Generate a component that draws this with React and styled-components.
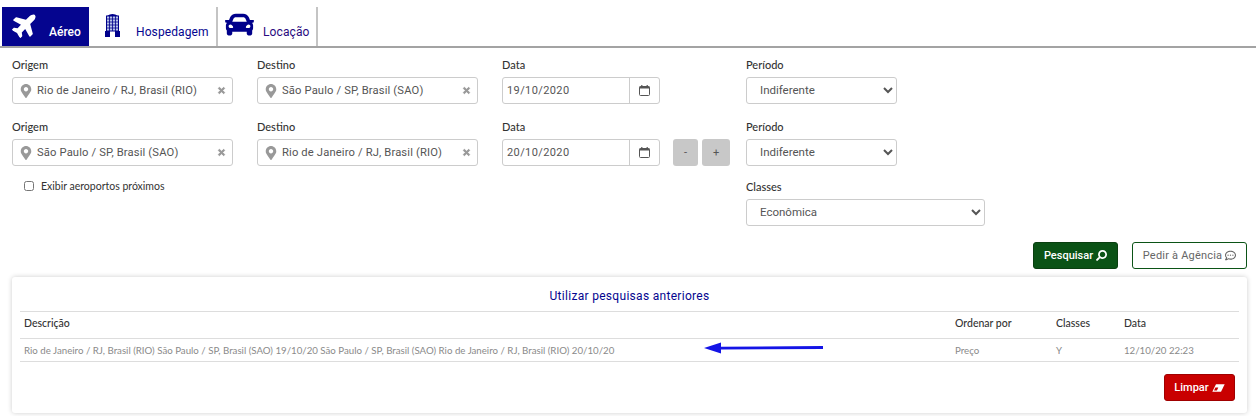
import React from "react";
import styled, { createGlobalStyle } from "styled-components";
import { FaPlane, FaCar, FaMapMarkerAlt, FaTimes, FaSearch, FaRegCommentDots } from "react-icons/fa";

const GlobalStyle = createGlobalStyle`
  html, body {
    margin: 0;
    padding: 0;
    background: #fff;
    font-family: "Roboto", "Liberation Sans", sans-serif;
  }
`;

const history = "Rio de Janeiro / RJ, Brasil (RIO) São Paulo / SP, Brasil (SAO) 19/10/20 São Paulo / SP, Brasil (SAO) Rio de Janeiro / RJ, Brasil (RIO) 20/10/20";

const HotelIcon = () => (
  <svg width="15" height="24" viewBox="0 0 15 24">
    <path d="M2 3 Q7.5 -1 13 3z" fill="#00008b" />
    <rect x="1.5" y="3" width="12" height="15" fill="#b9c4e8" stroke="#00008b" />
    <path d="M4.5 3v15M7.5 3v15M10.5 3v15M2 6h11M2 9h11M2 12h11M2 15h11" stroke="#00008b" strokeWidth="0.8" />
    <path d="M0 23h5v-5h5v5h5v-5H0z M0 23h5v1H0z M10 23h5v1h-5z" fill="#00008b" />
  </svg>
);

const CalendarIcon = () => (
  <svg width="11" height="11" viewBox="0 0 11 11">
    <rect x="0.5" y="1.5" width="10" height="9" rx="1" fill="none" stroke="#555" />
    <rect x="0.5" y="1.5" width="10" height="2" fill="#555" />
    <rect x="2.2" y="0" width="1.2" height="2.5" fill="#555" />
    <rect x="7.6" y="0" width="1.2" height="2.5" fill="#555" />
  </svg>
);

const EraserIcon = () => (
  <svg width="13" height="8" viewBox="0 0 13 8">
    <path d="M4 0.3H12.7L9 7.7H0.3z" fill="#fff" />
    <path d="M3.4 3.6H6.3L4.9 6.5H2z" fill="#c90000" />
  </svg>
);

const Field = ({ label, value }) => (
  <div>
    <Label>{label}</Label>
    <PlaceBox>
      <Pin><FaMapMarkerAlt /></Pin>
      <PlaceInput readOnly value={value} />
      <Clear><FaTimes /></Clear>
    </PlaceBox>
  </div>
);

const DateField = ({ value }) => (
  <div>
    <Label>Data</Label>
    <DateBox>
      <DateInput readOnly value={value} />
      <CalendarAddon><CalendarIcon /></CalendarAddon>
    </DateBox>
  </div>
);

const PeriodField = ({ label, value, wide }) => (
  <div>
    <Label>{label}</Label>
    <Select $wide={wide} defaultValue={value}>
      <option>{value}</option>
    </Select>
  </div>
);

export default function App() {
  return (
    <Page>
      <GlobalStyle />
      <Tabs>
        <Tab $active $width={87} $gap={10}>
          <PlaneIcon><FaPlane /></PlaneIcon>
          <TabLabel $active>Aéreo</TabLabel>
        </Tab>
        <Tab $width={128} $gap={16}>
          <HotelWrap><HotelIcon /></HotelWrap>
          <TabLabel>Hospedagem</TabLabel>
        </Tab>
        <Tab $width={99} $gap={9}>
          <CarIcon><FaCar /></CarIcon>
          <TabLabel $dark>Locação</TabLabel>
        </Tab>
      </Tabs>

      <Form>
        <FormRow>
          <Field label="Origem" value="Rio de Janeiro / RJ, Brasil (RIO)" />
          <Field label="Destino" value="São Paulo / SP, Brasil (SAO)" />
          <DateField value="19/10/2020" />
          <PeriodField label="Período" value="Indiferente" />
        </FormRow>
        <FormRow>
          <Field label="Origem" value="São Paulo / SP, Brasil (SAO)" />
          <Field label="Destino" value="Rio de Janeiro / RJ, Brasil (RIO)" />
          <DateWithSteppers>
            <DateField value="20/10/2020" />
            <Stepper $width={25}>-</Stepper>
            <Stepper $width={28}>+</Stepper>
          </DateWithSteppers>
          <PeriodField label="Período" value="Indiferente" />
        </FormRow>
        <OptionsRow>
          <Nearby>
            <input type="checkbox" />
            <span>Exibir aeroportos próximos</span>
          </Nearby>
          <PeriodField label="Classes" value="Econômica" wide />
        </OptionsRow>
      </Form>

      <Actions>
        <SearchButton>Pesquisar <Flip><FaSearch /></Flip></SearchButton>
        <AgencyButton>Pedir à Agência <FaRegCommentDots /></AgencyButton>
      </Actions>

      <Card>
        <CardTitle>Utilizar pesquisas anteriores</CardTitle>
        <Table>
          <thead>
            <tr>
              <Th>Descrição</Th>
              <Th $width={97}>Ordenar por</Th>
              <Th $width={64}>Classes</Th>
              <Th $width={115}>Data</Th>
            </tr>
          </thead>
          <tbody>
            <tr>
              <Td>{history}</Td>
              <Td>Preço</Td>
              <Td>Y</Td>
              <Td>12/10/20 22:23</Td>
            </tr>
          </tbody>
        </Table>
        <CardFooter>
          <ClearButton>Limpar <EraserIcon /></ClearButton>
        </CardFooter>
        <Arrow width="120" height="14" viewBox="0 0 120 14">
          <path d="M0 7 L17 1.5 L17 5.7 L119 5 L119 8 L17 8.6 L17 12.5 Z" fill="#1414e6" />
        </Arrow>
      </Card>
    </Page>
  );
}

const Page = styled.div`
  width: 1256px;
  height: 416px;
  overflow: hidden;
  background: #fff;
  padding-top: 7px;
  box-sizing: border-box;
`;

const Tabs = styled.div`
  display: flex;
  gap: 1px;
  height: 39px;
  padding-left: 2px;
  border-bottom: 2px solid #a3a3a3;
`;

const Tab = styled.div`
  width: ${(p) => p.$width}px;
  box-sizing: border-box;
  display: flex;
  align-items: flex-end;
  gap: ${(p) => p.$gap}px;
  padding: 0 0 7px 5px;
  background: ${(p) => (p.$active ? "#05058f" : "#fff")};
  border-right: 2px solid ${(p) => (p.$active ? "#05058f" : "#c4c4c4")};
`;

const TabLabel = styled.span`
  font-family: "Roboto", sans-serif;
  font-size: 12px;
  line-height: 14px;
  letter-spacing: ${(p) => (p.$active ? "0" : "0.1px")};
  font-weight: ${(p) => (p.$active ? 500 : 400)};
  color: ${(p) => (p.$active ? "#fff" : p.$dark ? "#2a0a80" : "#05058f")};
`;

const PlaneIcon = styled.span`
  display: flex;
  font-size: 27px;
  color: #fff;
  margin: 0 0 1px 5px;
  transform: rotate(-45deg);
`;

const HotelWrap = styled.span`
  display: flex;
  margin: 0 0 2px 10px;
`;

const CarIcon = styled.span`
  display: flex;
  font-size: 29px;
  color: #00008b;
  margin-left: 1px;
`;

const Form = styled.div`
  padding: 10px 0 0 12px;
`;

const FormRow = styled.div`
  display: grid;
  grid-template-columns: 221px 221px 220px 151px;
  column-gap: 24px;
  margin-bottom: 16px;
`;

const Label = styled.div`
  font-family: "Lato", sans-serif;
  font-size: 11px;
  font-weight: 500;
  line-height: 14px;
  color: #333;
  margin-bottom: 5px;
`;

const PlaceBox = styled.div`
  display: flex;
  align-items: center;
  width: 221px;
  height: 27px;
  box-sizing: border-box;
  border: 1px solid #ccc;
  border-radius: 3px;
  padding: 0 6px;
`;

const Pin = styled.span`
  display: flex;
  font-size: 14px;
  color: #999;
  margin-right: 4px;
`;

const PlaceInput = styled.input`
  flex: 1;
  min-width: 0;
  border: 0;
  outline: 0;
  padding: 0;
  font-family: "Roboto", sans-serif;
  font-size: 11.2px;
  letter-spacing: 0.15px;
  color: #555;
`;

const Clear = styled.span`
  display: flex;
  font-size: 9px;
  color: #999;
  svg {
    stroke-width: 50px;
  }
`;

const DateWithSteppers = styled.div`
  display: flex;
  align-items: flex-end;
  gap: 4px;
  & > div:first-child {
    margin-right: 9px;
  }
`;

const DateBox = styled.div`
  display: flex;
  width: 158px;
  height: 27px;
  box-sizing: border-box;
  border: 1px solid #ccc;
  border-radius: 3px;
`;

const DateInput = styled.input`
  width: 126px;
  box-sizing: border-box;
  border: 0;
  outline: 0;
  padding: 0 0 0 4px;
  font-family: "Roboto", sans-serif;
  font-size: 11px;
  letter-spacing: 0.4px;
  color: #555;
  background: transparent;
`;

const CalendarAddon = styled.span`
  flex: 1;
  display: flex;
  align-items: center;
  justify-content: center;
  border-left: 1px solid #ccc;
`;

const Stepper = styled.button`
  flex-shrink: 0;
  width: ${(p) => p.$width}px;
  height: 27px;
  border: 0;
  border-radius: 3px;
  padding: 0;
  background: #c8c8c8;
  color: #555;
  font-family: "Roboto", sans-serif;
  font-size: 11px;
`;

const Select = styled.select`
  display: block;
  width: ${(p) => (p.$wide ? 239 : 151)}px;
  height: 27px;
  box-sizing: border-box;
  border: 1px solid #ccc;
  border-radius: 3px;
  padding: 0 0 1px 9px;
  background: #fff;
  font-family: "Roboto", sans-serif;
  font-size: 11.5px;
  color: #555;
`;

const OptionsRow = styled.div`
  display: flex;
  justify-content: space-between;
  align-items: flex-start;
  width: 973px;
  margin-top: -2px;
`;

const Nearby = styled.label`
  display: flex;
  align-items: center;
  height: 12px;
  gap: 7px;
  padding-left: 12px;
  font-family: "Lato", sans-serif;
  font-size: 10.5px;
  color: #333;
  input {
    margin: 0;
    width: 10px;
    height: 10px;
  }
`;

const Actions = styled.div`
  display: flex;
  justify-content: flex-end;
  gap: 14px;
  height: 27px;
  padding: 16px 9px 0 0;
`;

const SearchButton = styled.button`
  width: 85px;
  height: 27px;
  padding: 0;
  border: 1px solid #0a3f10;
  border-radius: 3px;
  background: #0b5316;
  color: #fff;
  font-family: "Roboto", sans-serif;
  font-size: 11px;
  font-weight: 500;
  display: flex;
  align-items: center;
  justify-content: center;
  gap: 3px;
`;

const Flip = styled.span`
  display: flex;
  font-size: 11px;
  transform: scaleX(-1);
`;

const AgencyButton = styled.button`
  width: 115px;
  height: 27px;
  padding: 0;
  border: 1px solid #0b5316;
  border-radius: 3px;
  background: #fff;
  color: #666;
  font-family: "Roboto", sans-serif;
  font-size: 11px;
  letter-spacing: 0.2px;
  display: flex;
  align-items: center;
  justify-content: center;
  gap: 3px;
`;

const Card = styled.div`
  position: relative;
  width: 1235px;
  height: 136px;
  box-sizing: border-box;
  margin: 8px 0 0 12px;
  padding: 0 8px;
  border-radius: 3px;
  background: #fff;
  box-shadow: 0 0 5px rgba(0, 0, 0, 0.2);
`;

const CardTitle = styled.div`
  height: 34px;
  line-height: 38px;
  text-align: center;
  font-family: "Roboto", sans-serif;
  font-size: 12px;
  letter-spacing: 0.3px;
  color: #05058f;
`;

const Table = styled.table`
  width: 100%;
  border-collapse: collapse;
  table-layout: fixed;
  border-top: 1px solid #ddd;
  border-bottom: 1px solid #ddd;
  font-family: "Lato", sans-serif;
`;

const Th = styled.th`
  width: ${(p) => (p.$width ? `${p.$width}px` : "auto")};
  height: 22px;
  padding: 0 0 4px 4px;
  text-align: left;
  font-size: 10.5px;
  font-weight: 500;
  color: #333;
  border-bottom: 1px solid #ddd;
`;

const Td = styled.td`
  height: 21px;
  padding: 0 0 1px 4px;
  font-size: 9.7px;
  color: #8a8a8a;
  white-space: nowrap;
`;

const CardFooter = styled.div`
  display: flex;
  justify-content: flex-end;
  padding: 12px 4px 0 0;
`;

const ClearButton = styled.button`
  width: 71px;
  height: 27px;
  padding: 0;
  border: 1px solid #a00000;
  border-radius: 3px;
  background: #c90000;
  color: #fff;
  font-family: "Roboto", sans-serif;
  font-size: 11px;
  font-weight: 500;
  display: flex;
  align-items: center;
  justify-content: center;
  gap: 3px;
`;

const Arrow = styled.svg`
  position: absolute;
  left: 692px;
  top: 64px;
`;
